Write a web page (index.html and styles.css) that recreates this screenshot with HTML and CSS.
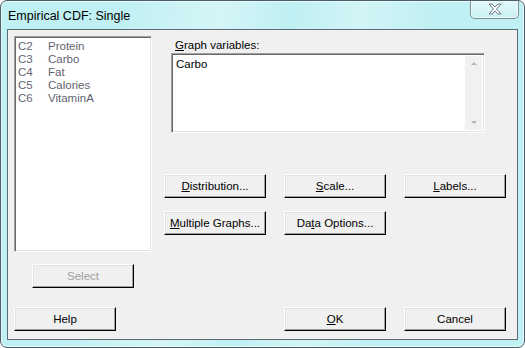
FILE: index.html
```html
<!DOCTYPE html>
<html lang="en">
<head>
  <meta charset="UTF-8" />
  <title>Empirical CDF: Single</title>
  <link rel="stylesheet" href="styles.css">
</head>
<body>
  <div class="window">
    <div class="titlebar">
      <span class="title">Empirical CDF: Single</span>
      <button class="close" title="Close">
        <svg width="16" height="12" viewBox="0 0 16 12">
          <path d="M2 1h3l3 3 3-3h3l-4.5 5 4.5 5h-3l-3-3-3 3H2l4.5-5z" fill="#fff" stroke="#6b7780" stroke-width="1" stroke-linejoin="round"/>
        </svg>
      </button>
    </div>

    <div class="client">
      <div class="left">
        <div class="listbox">
          <div class="item"><span class="col">C2</span>Protein</div>
          <div class="item"><span class="col">C3</span>Carbo</div>
          <div class="item"><span class="col">C4</span>Fat</div>
          <div class="item"><span class="col">C5</span>Calories</div>
          <div class="item"><span class="col">C6</span>VitaminA</div>
        </div>
        <button class="btn select" disabled>Select</button>
        <button class="btn help">Help</button>
      </div>

      <div class="right">
        <label class="field-label"><u>G</u>raph variables:</label>
        <div class="textbox">
          <div class="text">Carbo</div>
          <div class="scrollbar">
            <span class="arrow up"></span>
            <span class="arrow down"></span>
          </div>
        </div>

        <div class="btn-row first">
          <button class="btn"><u>D</u>istribution...</button>
          <button class="btn"><u>S</u>cale...</button>
          <button class="btn"><u>L</u>abels...</button>
        </div>
        <div class="btn-row second">
          <button class="btn"><u>M</u>ultiple Graphs...</button>
          <button class="btn">Da<u>t</u>a Options...</button>
        </div>
        <div class="btn-row bottom">
          <span class="spacer"></span>
          <button class="btn"><u>O</u>K</button>
          <button class="btn">Cancel</button>
        </div>
      </div>
    </div>
  </div>
</body>
</html>
```

FILE: styles.css
```css
body {
  margin: 0;
  background: #fff;
  font-family: "Liberation Sans", Arial, sans-serif;
}

.window {
  width: 523px;
  height: 346px;
  border: 1px solid #4f5d66;
  border-radius: 7px;
  background:
    linear-gradient(100deg, rgba(255,255,255,0) 20%, rgba(255,255,255,0.35) 38%, rgba(255,255,255,0) 50%, rgba(255,255,255,0.3) 62%, rgba(255,255,255,0) 75%),
    #bff0f3;
  box-shadow: inset 0 0 0 1px #e2fbfc;
  display: flex;
  flex-direction: column;
  overflow: hidden;
}

.titlebar {
  height: 28px;
  display: flex;
  align-items: flex-start;
  padding: 0 5px 0 7px;
}

.title {
  font-size: 12.5px;
  color: #000;
  margin-top: 8px;
  flex: 1;
}

.close {
  width: 49px;
  height: 19px;
  margin-top: -1px;
  padding: 0;
  border: 1px solid #7d8e98;
  border-top: none;
  border-radius: 0 0 5px 5px;
  background: linear-gradient(#e6fafb, #c9f1f4);
  box-shadow: inset 0 0 0 1px rgba(255,255,255,0.6);
  display: flex;
  justify-content: center;
  align-items: center;
}

.client {
  margin: 0 6px 6px 6px;
  height: 311px;
  box-sizing: border-box;
  border: 1px solid #5d6c76;
  background: #f0f0f0;
  padding: 6px;
  display: grid;
  grid-template-columns: 138px 1fr;
  column-gap: 12px;
  font-size: 11.5px;
}

.left {
  display: flex;
  flex-direction: column;
  align-items: flex-start;
}

.listbox {
  width: 138px;
  height: 216px;
  box-sizing: border-box;
  background: #fff;
  border: 1px solid;
  border-color: #a0a0a0 #ffffff #ffffff #a0a0a0;
  box-shadow: inset 1px 1px 0 #696969, inset -1px -1px 0 #e3e3e3;
  padding: 3px 3px;
  color: #5f6370;
}

.item {
  height: 13px;
  line-height: 13px;
}

.col {
  display: inline-block;
  width: 30px;
}

.btn {
  width: 102px;
  height: 24px;
  box-sizing: border-box;
  padding: 0;
  font-family: inherit;
  font-size: 11.5px;
  color: #000;
  background: #f0f0f0;
  border: 1px solid;
  border-color: #ffffff #000000 #000000 #ffffff;
  box-shadow: inset -1px -1px 0 #a0a0a0, inset 1px 1px 0 #e3e3e3;
}

.btn:disabled {
  color: #a0a0a0;
}

.select {
  margin: 12px 0 0 18px;
}

.help {
  margin-top: 19px;
}

.right {
  display: flex;
  flex-direction: column;
}

.field-label {
  margin: 2px 0 0 11px;
  height: 15px;
  line-height: 15px;
  color: #000;
}

.textbox {
  width: 314px;
  height: 80px;
  margin-left: 7px;
  box-sizing: border-box;
  background: #fff;
  border: 1px solid;
  border-color: #a0a0a0 #ffffff #ffffff #a0a0a0;
  box-shadow: inset 1px 1px 0 #696969, inset -1px -1px 0 #e3e3e3;
  padding: 2px;
  display: flex;
}

.text {
  flex: 1;
  padding: 2px 2px;
  color: #000;
}

.scrollbar {
  width: 17px;
  background: #f1f1f1;
  display: flex;
  flex-direction: column;
  justify-content: space-between;
  align-items: center;
  padding: 6px 0;
}

.arrow {
  width: 0;
  height: 0;
  border-left: 3px solid transparent;
  border-right: 3px solid transparent;
}

.arrow.up {
  border-bottom: 3px solid #b4b4b4;
}

.arrow.down {
  border-top: 3px solid #b4b4b4;
}

.btn-row {
  display: flex;
  gap: 18px;
}

.btn-row.first {
  margin-top: 41px;
}

.btn-row.second {
  margin-top: 13px;
}

.btn-row.bottom {
  margin-top: 72px;
}

.spacer {
  width: 102px;
}
```
